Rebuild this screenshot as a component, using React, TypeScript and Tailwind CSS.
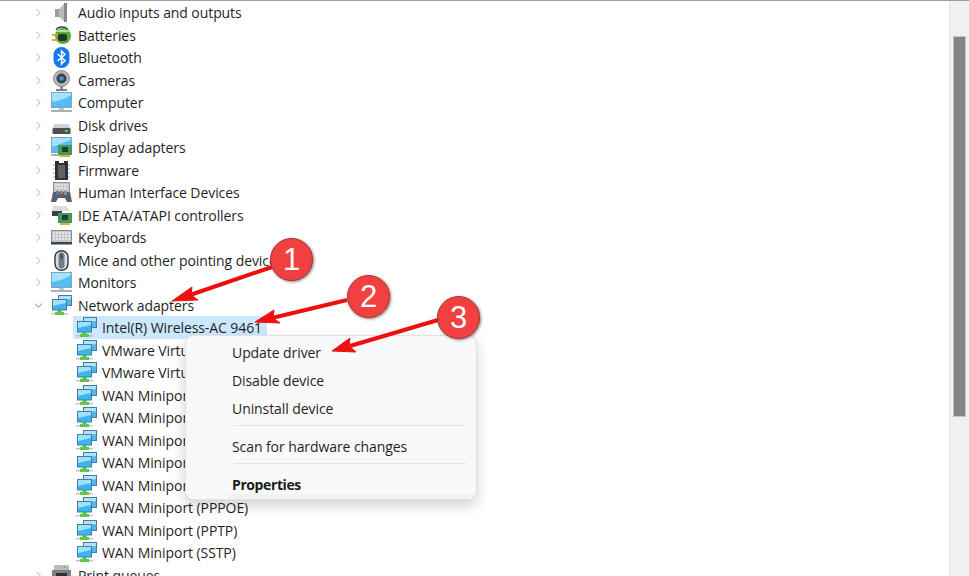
import { ChevronRight, ChevronDown } from 'lucide-react';
import type { ReactNode } from 'react';

function Svg({ children }: { children: ReactNode }) {
    return (
        <svg width="21" height="21" viewBox="0 0 21 21" className="shrink-0">
            {children}
        </svg>
    );
}

const AudioIcon = () => (
    <Svg>
        <rect x="4" y="7" width="4" height="8" fill="#9a9ea1" />
        <path d="M8 7 L14 1 V20 L8 15 Z" fill="#b8bbbd" />
        <path d="M13 1 H16 V20 H13 Z" fill="#85898c" />
    </Svg>
);

const BatteryIcon = () => (
    <Svg>
        <path d="M5 5 C7 1 15 1 17 5" fill="none" stroke="#3d4245" strokeWidth="1.3" />
        <ellipse cx="12" cy="11" rx="8" ry="8" fill="#4fae39" />
        <path d="M5 7 H19 C18 4 6 4 5 7 Z" fill="#b7e0a4" />
        <rect x="7" y="9" width="9" height="7" rx="2" fill="#2b3033" />
        <rect x="1" y="9" width="6" height="2" fill="#d9a92c" />
        <rect x="1" y="14" width="6" height="2" fill="#d9a92c" />
    </Svg>
);

const BluetoothIcon = () => (
    <Svg>
        <rect x="2.5" y="0" width="16" height="21" rx="8" fill="#1478ee" />
        <path d="M6.5 7 L14 13.5 L10.5 17 V4 L14 7.5 L6.5 14" fill="none" stroke="#fff" strokeWidth="1.5" />
    </Svg>
);

const CameraIcon = () => (
    <Svg>
        <circle cx="10.5" cy="8.5" r="8" fill="#b7babc" stroke="#85898c" />
        <circle cx="10.5" cy="8.5" r="5" fill="#39424a" />
        <circle cx="10.5" cy="8.5" r="2.3" fill="#5a8fc0" />
        <rect x="9" y="16" width="3" height="3" fill="#8a8d90" />
        <rect x="5" y="19" width="11" height="2" fill="#7d8184" />
    </Svg>
);

const MonitorIcon = () => (
    <Svg>
        <rect x="0.5" y="0.5" width="20" height="15" fill="#55bdf3" stroke="#7aa6bf" />
        <path d="M1 1 H20 V3 C14 7 7 9 1 10 Z" fill="#a6e0fb" />
        <rect x="8" y="16" width="5" height="2" fill="#c0c4c7" />
        <rect x="0" y="18" width="21" height="2" fill="#aab0b4" />
    </Svg>
);

const DiskIcon = () => (
    <Svg>
        <path d="M3.5 9 H17.5 L19.5 13 H1.5 Z" fill="#cfd1d2" />
        <rect x="1.5" y="13" width="18" height="6" rx="1" fill="#4d5154" />
        <rect x="14" y="15" width="3" height="2" fill="#45d24a" />
    </Svg>
);

const DisplayIcon = () => (
    <Svg>
        <rect x="0.5" y="0.5" width="20" height="15" fill="#55bdf3" stroke="#7aa6bf" />
        <path d="M1 1 H20 V3 L1 10 Z" fill="#a6e0fb" />
        <rect x="0" y="17" width="9" height="2" fill="#aab0b4" />
        <rect x="7" y="8" width="14" height="10" fill="#3f9a5f" />
        <rect x="11" y="10" width="6" height="5" fill="#2c3a34" />
        <rect x="9" y="18" width="10" height="2" fill="#e0b030" />
    </Svg>
);

const FirmwareIcon = () => (
    <Svg>
        <path d="M4 1 H8 V3 H13 V1 H17 V20 H4 Z" fill="#2f3235" />
        <rect x="7" y="5" width="7" height="13" fill="#5e6265" />
        <path d="M4 5 H2 M4 9 H2 M4 13 H2 M4 17 H2 M17 5 H19 M17 9 H19 M17 13 H19 M17 17 H19" stroke="#a8abad" strokeWidth="1.2" />
    </Svg>
);

const HidIcon = () => (
    <Svg>
        <rect x="2.5" y="0.5" width="16" height="10" fill="#c3c6c9" stroke="#8d9094" />
        <path d="M4 3 H17 M4 6 H17" stroke="#f2f2f2" strokeWidth="1.4" strokeDasharray="2 1" />
        <path d="M0 20 L2 10 H19 L21 20 H16 L14 16 H7 L5 20 Z" fill="#5a5f63" />
        <rect x="5" y="9" width="3" height="4" fill="#3c80d0" />
        <rect x="9" y="9" width="3" height="3" fill="#d06a3c" />
        <rect x="13" y="9" width="3" height="4" fill="#8a8f93" />
    </Svg>
);

const IdeIcon = () => (
    <Svg>
        <path d="M2 1 H15 L19 6 H1 Z" fill="#dadcdd" />
        <rect x="1" y="6" width="10" height="5" fill="#3f4346" />
        <rect x="7" y="8" width="14" height="10" fill="#3f9a5f" />
        <rect x="11" y="10" width="6" height="5" fill="#2c3a34" />
        <rect x="9" y="18" width="10" height="2" fill="#e0b030" />
    </Svg>
);

const KeyboardIcon = () => (
    <Svg>
        <rect x="0.5" y="3.5" width="20" height="13" fill="#c3c6c9" stroke="#8d9094" />
        <path d="M2 6 H19 M2 9 H19 M2 12 H19" stroke="#f0f1f2" strokeWidth="1.6" strokeDasharray="2 1" />
        <rect x="0" y="15" width="21" height="2.5" fill="#3f4346" />
    </Svg>
);

const MouseIcon = () => (
    <Svg>
        <rect x="4" y="0.7" width="13" height="19.6" rx="6.5" fill="#dcdedf" stroke="#34383b" strokeWidth="1.4" />
        <rect x="7.5" y="2.5" width="6" height="16" rx="3" fill="#6c7f92" />
        <rect x="9.7" y="4" width="1.6" height="5" fill="#39424a" />
    </Svg>
);

const NetworkIcon = () => (
    <Svg>
        <rect x="7.5" y="0.5" width="13" height="10" fill="#55b4ea" stroke="#3f7ea3" />
        <path d="M8 1 H20 V4 L8 6 Z" fill="#b0e2fa" />
        <rect x="1.5" y="4.5" width="14" height="10.5" fill="#3fb3f0" stroke="#3f7ea3" />
        <path d="M2 5 H15 V8 L2 11 Z" fill="#a2dffc" />
        <rect x="6.5" y="15" width="4" height="2" fill="#53bd46" />
        <rect x="4" y="17" width="9" height="3" fill="#5cc94d" />
        <rect x="0" y="18" width="4" height="1.4" fill="#bfc3c5" />
        <rect x="13" y="18" width="4" height="1.4" fill="#bfc3c5" />
    </Svg>
);

const PrinterIcon = () => (
    <Svg>
        <rect x="3" y="0" width="15" height="6" rx="1" fill="#b9bcbe" />
        <rect x="1" y="5" width="19" height="14" fill="#7b8083" />
        <rect x="5" y="8" width="11" height="10" fill="#2d3033" />
        <rect x="12" y="2" width="3" height="1" fill="#45d24a" />
    </Svg>
);

const categories: { name: string; icon: ReactNode }[] = [
    { name: 'Audio inputs and outputs', icon: <AudioIcon /> },
    { name: 'Batteries', icon: <BatteryIcon /> },
    { name: 'Bluetooth', icon: <BluetoothIcon /> },
    { name: 'Cameras', icon: <CameraIcon /> },
    { name: 'Computer', icon: <MonitorIcon /> },
    { name: 'Disk drives', icon: <DiskIcon /> },
    { name: 'Display adapters', icon: <DisplayIcon /> },
    { name: 'Firmware', icon: <FirmwareIcon /> },
    { name: 'Human Interface Devices', icon: <HidIcon /> },
    { name: 'IDE ATA/ATAPI controllers', icon: <IdeIcon /> },
    { name: 'Keyboards', icon: <KeyboardIcon /> },
    { name: 'Mice and other pointing devices', icon: <MouseIcon /> },
    { name: 'Monitors', icon: <MonitorIcon /> },
];

const adapters = [
    'Intel(R) Wireless-AC 9461',
    'VMware Virtual Ethernet Adapter for VMnet1',
    'VMware Virtual Ethernet Adapter for VMnet8',
    'WAN Miniport (IKEv2)',
    'WAN Miniport (IP)',
    'WAN Miniport (IPv6)',
    'WAN Miniport (L2TP)',
    'WAN Miniport (Network Monitor)',
    'WAN Miniport (PPPOE)',
    'WAN Miniport (PPTP)',
    'WAN Miniport (SSTP)',
];

function CategoryRow({ name, icon, open }: { name: string; icon: ReactNode; open?: boolean }) {
    return (
        <div className="flex h-[22.5px] items-center">
            <div className="flex w-[48px] shrink-0 justify-end pr-[1.5px]">
                {open ? (
                    <ChevronDown size={13} strokeWidth={1.5} className="mr-[2px] text-[#555555]" />
                ) : (
                    <ChevronRight size={13} strokeWidth={1.5} className="mr-[2px] text-[#999999]" />
                )}
            </div>
            <div className="flex w-[27px] shrink-0 pl-[3px]">{icon}</div>
            <span className="ml-[3px] whitespace-nowrap">{name}</span>
        </div>
    );
}

function AdapterRow({ name, selected }: { name: string; selected: boolean }) {
    return (
        <div className="flex h-[22.5px] items-center pl-[73px]">
            <div className={`flex h-full items-center ${selected ? 'w-[194px] bg-[#cce8ff]' : ''}`}>
                <div className="ml-[3px] flex w-[23px] shrink-0">
                    <NetworkIcon />
                </div>
                <span className="ml-[3px] whitespace-nowrap">{name}</span>
            </div>
        </div>
    );
}

function MenuItem({ label, bold }: { label: string; bold?: boolean }) {
    return (
        <div className={`pl-[46px] leading-[20px] ${bold ? 'font-bold tracking-[-0.4px] text-[#1a1a1a]' : ''}`}>
            {label}
        </div>
    );
}

const MenuSeparator = () => <div className="ml-[48px] mr-[10px] h-px bg-[#e3e3e3]" />;

function Badge({ n, x, y }: { n: number; x: string; y: string }) {
    return (
        <div
            className={`absolute flex h-[43px] w-[43px] items-center justify-center rounded-full border border-[#b52f2f] bg-[#f04040] font-["Liberation_Sans",sans-serif] text-[31px] leading-none tracking-normal text-white shadow-[1px_1px_3px_rgba(0,0,0,0.5)] ${x} ${y}`}
        >
            {n}
        </div>
    );
}

export default function App() {
    return (
        <div className='relative h-[576px] w-[969px] overflow-hidden bg-white font-["Open_Sans","Noto_Sans",sans-serif] text-[14px] tracking-[-0.08px] text-[#1f1f1f]'>
            <div className="flex h-full flex-col">
                <div className="h-px shrink-0 bg-[#a0a0a0]" />
                <div className="flex min-h-0 flex-1">
                    <div className="min-w-0 flex-1 overflow-hidden pt-[0.25px]">
                        {categories.map((c) => (
                            <CategoryRow key={c.name} name={c.name} icon={c.icon} />
                        ))}
                        <CategoryRow name="Network adapters" icon={<NetworkIcon />} open />
                        {adapters.map((a, i) => (
                            <AdapterRow key={a} name={a} selected={i === 0} />
                        ))}
                        <CategoryRow name="Print queues" icon={<PrinterIcon />} />
                    </div>
                    <div className="flex w-[20px] shrink-0 border-l border-[#e8e8e8] bg-[#f0f0f0] pt-[35px] pl-[3px]">
                        <div className="h-[381px] w-[13px] border border-[#c4c4c4] bg-[#858585]" />
                    </div>
                </div>
            </div>

            {/* context menu */}
            <div className="absolute left-[185px] top-[335px] h-[165px] w-[292px] overflow-hidden rounded-[8px] border border-[#e2e2e2] bg-[#f9f9f9] pt-[7px] shadow-[0_6px_14px_rgba(0,0,0,0.18)]">
                <MenuItem label="Update driver" />
                <div className="h-[8px]" />
                <MenuItem label="Disable device" />
                <div className="h-[8px]" />
                <MenuItem label="Uninstall device" />
                <div className="h-[6px]" />
                <MenuSeparator />
                <div className="h-[11px]" />
                <MenuItem label="Scan for hardware changes" />
                <div className="h-[6px]" />
                <MenuSeparator />
                <div className="h-[11px]" />
                <MenuItem label="Properties" bold />
                <div className="absolute bottom-0 left-[42px] right-0 h-[5px] bg-[#f2f2f2]" />
            </div>

            {/* annotation arrows */}
            <svg width="969" height="576" viewBox="0 0 969 576" className="pointer-events-none absolute left-0 top-0">
                <g fill="#ee0f0f" stroke="#ee0f0f" strokeLinejoin="round">
                    <path d="M272 267 L190 295" strokeWidth="4" fill="none" />
                    <path d="M172 301 L192 287 L191 295 L198 300 Z" strokeWidth="1" />
                    <path d="M347 300 L272 318" strokeWidth="4" fill="none" />
                    <path d="M255 322 L274 310 L273 318 L280 323 Z" strokeWidth="1" />
                    <path d="M438 320 L350 346" strokeWidth="4" fill="none" />
                    <path d="M332 351 L350 338 L349 346 L356 352 Z" strokeWidth="1" />
                </g>
            </svg>
            <Badge n={1} x="left-[270px]" y="top-[238px]" />
            <Badge n={2} x="left-[347px]" y="top-[275px]" />
            <Badge n={3} x="left-[437px]" y="top-[296px]" />
        </div>
    );
}
